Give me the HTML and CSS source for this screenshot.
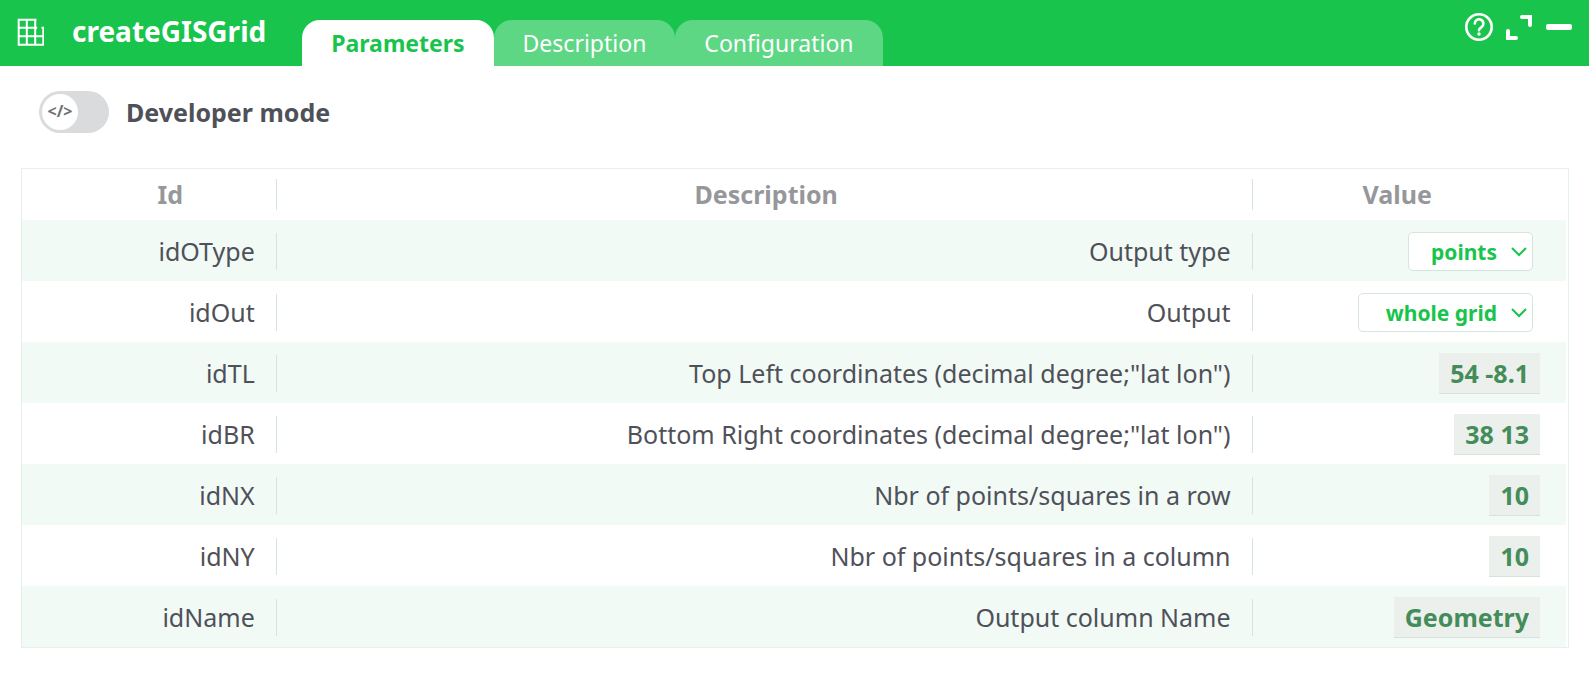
FILE: index.html
```
<!DOCTYPE html>
<html lang="en">
<head>
  <meta charset="UTF-8" />
  <meta name="viewport" content="width=device-width, initial-scale=1.0" />
  <title>createGISGrid</title>
  <link rel="stylesheet" href="styles.css">
</head>
<body>
  <header class="header">
    <svg class="logo" width="28" height="28" viewBox="0 0 28 28">
      <path d="M20.500 1.700H2.700v25H27.300V9.700M2.700 9.700h18.500M25.500 9.700h2.500M2.700 18.300h24.600M10.800 1.700v25M19.200 1.700v25" />
    </svg>
    <h1 class="title">createGISGrid</h1>
    <nav class="tabs">
      <button class="tab active" type="button">Parameters</button>
      <button class="tab" type="button">Description</button>
      <button class="tab" type="button">Configuration</button>
    </nav>
    <div class="actions">
      <button class="action" type="button" aria-label="Help">
        <svg width="28" height="28" viewBox="0 0 28 28">
          <circle cx="14" cy="14" r="12.700" />
          <path d="M9.800 10.500a4.300 4.300 0 1 1 6.700 3.600c-1.600 1.100-2.500 1.600-2.500 3.200" stroke-linecap="round" />
          <circle class="dot" cx="14" cy="21" r="1.700" />
        </svg>
      </button>
      <button class="action" type="button" aria-label="Expand">
        <svg width="28" height="28" viewBox="0 0 28 28">
          <path class="thick" d="M17 4h8v8M3 18v7h8" />
        </svg>
      </button>
      <button class="action" type="button" aria-label="Minimize">
        <svg width="28" height="28" viewBox="0 0 28 28">
          <rect class="dot" x="1" y="11" width="26" height="6" rx="2" />
        </svg>
      </button>
    </div>
  </header>

  <main class="content">
    <label class="dev-mode">
      <span class="switch">
        <input class="switch-input" type="checkbox">
        <span class="knob" aria-hidden="true">&lt;/&gt;</span>
      </span>
      Developer mode
    </label>

    <div class="table-box">
      <table class="params">
        <thead>
          <tr>
            <th class="col-id"><div class="cell">Id</div></th>
            <th><div class="cell">Description</div></th>
            <th class="col-value">Value</th>
          </tr>
        </thead>
        <tbody>
          <tr>
            <td><div class="cell">idOType</div></td>
            <td><div class="cell"><label for="idOType">Output type</label></div></td>
            <td class="value">
              <span class="select-box">
                <select class="select" id="idOType"><option>points</option></select>
                <svg class="chevron" width="16" height="10" viewBox="0 0 16 10"><path d="M1 1l7 7 7-7" /></svg>
              </span>
            </td>
          </tr>
          <tr>
            <td><div class="cell">idOut</div></td>
            <td><div class="cell"><label for="idOut">Output</label></div></td>
            <td class="value">
              <span class="select-box wide">
                <select class="select" id="idOut"><option>whole grid</option></select>
                <svg class="chevron" width="16" height="10" viewBox="0 0 16 10"><path d="M1 1l7 7 7-7" /></svg>
              </span>
            </td>
          </tr>
          <tr>
            <td><div class="cell">idTL</div></td>
            <td><div class="cell"><label for="idTL">Top Left coordinates (decimal degree;"lat lon")</label></div></td>
            <td class="value"><input class="field" id="idTL" type="text" value="54 -8.1"></td>
          </tr>
          <tr>
            <td><div class="cell">idBR</div></td>
            <td><div class="cell"><label for="idBR">Bottom Right coordinates (decimal degree;"lat lon")</label></div></td>
            <td class="value"><input class="field" id="idBR" type="text" value="38 13"></td>
          </tr>
          <tr>
            <td><div class="cell">idNX</div></td>
            <td><div class="cell"><label for="idNX">Nbr of points/squares in a row</label></div></td>
            <td class="value"><input class="field" id="idNX" type="text" value="10"></td>
          </tr>
          <tr>
            <td><div class="cell">idNY</div></td>
            <td><div class="cell"><label for="idNY">Nbr of points/squares in a column</label></div></td>
            <td class="value"><input class="field" id="idNY" type="text" value="10"></td>
          </tr>
          <tr>
            <td><div class="cell">idName</div></td>
            <td><div class="cell"><label for="idName">Output column Name</label></div></td>
            <td class="value"><input class="field" id="idName" type="text" value="Geometry"></td>
          </tr>
        </tbody>
      </table>
    </div>
  </main>
</body>
</html>
```
FILE: styles.css
```
* {
  box-sizing: border-box;
}
body {
  margin: 0;
  background: #fff;
  color: #4f5159;
  font-family: 'Noto Sans', sans-serif;
  font-size: 25px;
}
button, input, select {
  font-family: inherit;
  margin: 0;
}

/* header */
.header {
  display: flex;
  height: 66px;
  padding: 0 16px;
  background: #19c44d;
  color: #fff;
}
.logo {
  margin-top: 18px;
  fill: none;
  stroke: #fff;
  stroke-width: 2;
}
.title {
  margin: 0 36px 0 28px;
  font-size: 28px;
  line-height: 62px;
}
.tabs {
  display: flex;
  align-items: flex-end;
}
.tab {
  height: 46px;
  padding: 0 29px;
  border: none;
  border-radius: 18px 18px 0 0;
  background: #5dd784;
  color: #fff;
  font-size: 23px;
  line-height: 46px;
  cursor: pointer;
}
.tab.active {
  background: #fff;
  color: #19c44d;
  font-weight: bold;
}
.actions {
  display: flex;
  gap: 12px;
  margin: 13px 0 0 auto;
}
.action {
  width: 28px;
  height: 28px;
  padding: 0;
  border: none;
  background: none;
  cursor: pointer;
}
.action svg {
  display: block;
  fill: none;
  stroke: #fff;
  stroke-width: 2.6;
}
.action .thick {
  stroke-width: 4;
  stroke-linecap: round;
}
.action .dot {
  fill: #fff;
  stroke: none;
}

/* developer mode */
.content {
  padding: 25px 20px 24px 21px;
}
.dev-mode {
  display: flex;
  align-items: center;
  gap: 17px;
  width: fit-content;
  margin-left: 18px;
  font-weight: bold;
  line-height: 42px;
}
.switch {
  display: grid;
  align-items: center;
}
.switch-input,
.knob {
  grid-area: 1 / 1;
}
.switch-input {
  appearance: none;
  width: 70px;
  height: 42px;
  border-radius: 21px;
  background: #dadbdd;
}
.knob {
  width: 36px;
  height: 36px;
  margin-left: 3px;
  border-radius: 50%;
  background: #fff;
  color: #6f7177;
  font-size: 16px;
  line-height: 34px;
  text-align: center;
}
.switch-input:checked + .knob {
  margin-left: 31px;
}

/* parameters table */
.table-box {
  margin-top: 35px;
  padding-right: 2px;
  border: 1px solid #e6f0ec;
}
.params {
  width: 100%;
  border-collapse: collapse;
  table-layout: fixed;
}
th {
  padding: 10px 0 10px 4px;
  color: #96979b;
  line-height: 31px;
}
td {
  height: 61px;
  padding: 2px 0 0;
  text-align: right;
}
.col-id {
  width: 16.5%;
  padding-left: 43px;
}
.col-value {
  width: 20.3%;
  padding-right: 28px;
}
tbody tr:nth-child(odd) {
  background: #f2faf6;
}
.cell {
  border-right: 1px solid #d5e4dd;
}
td .cell {
  padding-right: 21px;
  line-height: 37px;
}
.value {
  padding-right: 26px;
  font-size: 0;
}
.field {
  field-sizing: content;
  height: 41px;
  padding: 0 11px;
  border: none;
  border-bottom: 1px solid #d8e2dc;
  background: #ebf0ec;
  color: #448c5a;
  font-size: 25px;
  font-weight: bold;
  text-align: right;
}
.select-box {
  display: inline-grid;
  align-items: center;
  width: 125px;
  margin-right: 7px;
}
.select-box.wide {
  width: 175px;
}
.select,
.chevron {
  grid-area: 1 / 1;
}
.select {
  appearance: none;
  height: 39px;
  padding: 0 35px 0 8px;
  border: 1px solid #d5e4dd;
  border-radius: 5px;
  background: #fff;
  color: #19c44d;
  font-size: 21px;
  font-weight: bold;
  text-align: right;
  text-align-last: right;
}
.chevron {
  justify-self: end;
  margin-right: 6px;
  fill: none;
  stroke: #19c44d;
  stroke-width: 2;
  pointer-events: none;
}
```
